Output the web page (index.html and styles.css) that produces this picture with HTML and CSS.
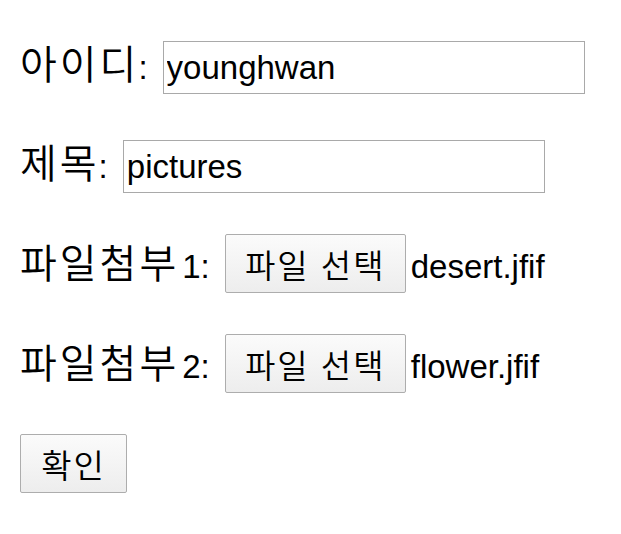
FILE: index.html
```html
<!DOCTYPE html>
<html lang="ko">
<head>
<meta charset="utf-8">
<title>업로드</title>
<link rel="stylesheet" href="styles.css">
</head>
<body>
<form class="form">
  <div class="row row-first">
    <label class="label"><span class="ko">아이디</span>:</label>
    <input class="field" type="text" value="younghwan">
  </div>
  <div class="row">
    <label class="label"><span class="ko">제목</span>:</label>
    <input class="field" type="text" value="pictures">
  </div>
  <div class="row">
    <span class="label"><span class="ko">파일첨부</span><span class="num">1</span>:</span>
    <span class="file">
      <button class="btn btn-file" type="button">파일 선택</button>
      <span class="filename">desert.jfif</span>
    </span>
  </div>
  <div class="row">
    <span class="label"><span class="ko">파일첨부</span><span class="num">2</span>:</span>
    <span class="file">
      <button class="btn btn-file" type="button">파일 선택</button>
      <span class="filename">flower.jfif</span>
    </span>
  </div>
  <div class="row">
    <button class="btn btn-ok" type="submit">확인</button>
  </div>
</form>
</body>
</html>
```
FILE: styles.css
```css
html, body {
  margin: 0;
  background: #ffffff;
}

body {
  padding: 41px 0 0 20px;
  font-family: "Liberation Sans", Arial, "Noto Sans CJK KR", sans-serif;
  font-size: 33px;
  color: #000000;
}

.form {
  display: flex;
  flex-direction: column;
  gap: 41px;
}

.row {
  display: flex;
  align-items: baseline;
  gap: 15px;
}

.row-first {
  margin-bottom: 5px;
}

.label {
  line-height: 37px;
  white-space: nowrap;
}

.ko {
  font-family: "Noto Sans CJK KR", sans-serif;
  font-size: 40px;
  font-weight: 350;
  letter-spacing: 3px;
  margin-right: -1px;
  line-height: 30px;
}

.num {
  margin-left: 4px;
}

.field {
  box-sizing: border-box;
  width: 422px;
  height: 53px;
  margin: 0;
  padding: 0 3px;
  border: 1px solid #a9a9a9;
  border-radius: 0;
  background: #ffffff;
  font-family: "Liberation Sans", Arial, sans-serif;
  font-size: 33px;
  color: #000000;
  outline: none;
}

.file {
  display: flex;
  align-items: baseline;
  gap: 5px;
}

.btn {
  box-sizing: border-box;
  height: 59px;
  margin: 0;
  border: 1px solid #adadad;
  border-radius: 2px;
  background: linear-gradient(#fbfbfb, #ededed);
  font-family: "Noto Sans CJK KR", sans-serif;
  font-size: 33px;
  font-weight: 350;
  letter-spacing: 2px;
  color: #000000;
  line-height: normal;
}

.btn-file {
  width: 181px;
  padding: 0;
}

.btn-ok {
  width: 107px;
  padding: 0;
}

.filename {
  white-space: nowrap;
}
```
